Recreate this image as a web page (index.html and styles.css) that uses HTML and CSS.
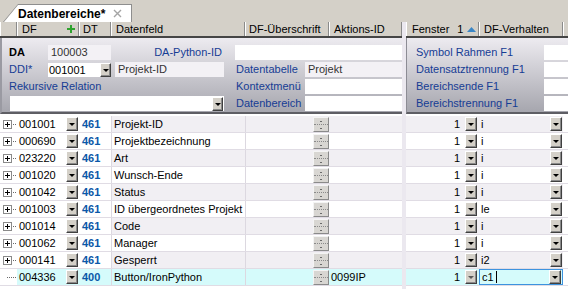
FILE: index.html
```html
<!DOCTYPE html>
<html lang="de">
<head>
  <meta charset="UTF-8"/>
  <title>Datenbereiche</title>
  <link rel="stylesheet" href="styles.css">
</head>
<body>

  <!-- TAB STRIP -->
  <div class="tabs">
    <div class="tab">
      <div class="tab-in">
        <span class="tab-title">Datenbereiche*</span>
        <svg class="tab-x" width="9" height="9" viewBox="0 0 9 9"><path d="M1 1L8 8M8 1L1 8" stroke="#a4a4a4" stroke-width="1.4"/></svg>
      </div>
    </div>
  </div>

  <div class="grid">

    <!-- LEFT PANE -->
    <div class="pane pane-left">
      <div class="head">
        <div class="hc c-tree"></div>
        <div class="hc c-df">DF
          <svg class="plus" width="8" height="8" viewBox="0 0 8 8"><path d="M3 0h2v3h3v2H5v3H3V5H0V3h3z" fill="#2fa32f"/></svg>
        </div>
        <div class="hc c-dt">DT</div>
        <div class="hc c-feld">Datenfeld</div>
        <div class="hc c-ueb">DF-Überschrift</div>
        <div class="hc c-akt">Aktions-ID</div>
      </div>

      <div class="form form-left">
        <div class="lbl bold">DA</div>
        <div class="fld ro">100003</div>
        <div class="lbl python">DA-Python-ID</div>
        <div class="fld wide"></div>

        <div class="lbl">DDI*</div>
        <div class="combo"><span class="fld">001001</span><span class="dd"></span></div>
        <div class="fld ro c4">Projekt-ID</div>
        <div class="lbl c6">Datentabelle</div>
        <div class="fld ro c7">Projekt</div>

        <div class="lbl span4">Rekursive Relation</div>
        <div class="lbl c6">Kontextmenü</div>
        <div class="fld c7"></div>

        <div class="fld select span4"><span class="dd"></span></div>
        <div class="lbl c6">Datenbereich</div>
        <div class="fld c7"></div>
      </div>

      <div class="rows">
        <div class="row alt">
          <div class="c-tree"><span class="box"></span><span class="dots"></span></div>
          <div class="c-df">001001<span class="dd"></span></div>
          <div class="c-dt">461</div>
          <div class="c-feld">Projekt-ID</div>
          <div class="c-ueb"><span class="ell"><i></i><i></i></span></div>
          <div class="c-akt"></div>
        </div>
        <div class="row">
          <div class="c-tree"><span class="box"></span><span class="dots"></span></div>
          <div class="c-df">000690<span class="dd"></span></div>
          <div class="c-dt">461</div>
          <div class="c-feld">Projektbezeichnung</div>
          <div class="c-ueb"><span class="ell"><i></i><i></i></span></div>
          <div class="c-akt"></div>
        </div>
        <div class="row alt">
          <div class="c-tree"><span class="box"></span><span class="dots"></span></div>
          <div class="c-df">023220<span class="dd"></span></div>
          <div class="c-dt">461</div>
          <div class="c-feld">Art</div>
          <div class="c-ueb"><span class="ell"><i></i><i></i></span></div>
          <div class="c-akt"></div>
        </div>
        <div class="row">
          <div class="c-tree"><span class="box"></span><span class="dots"></span></div>
          <div class="c-df">001020<span class="dd"></span></div>
          <div class="c-dt">461</div>
          <div class="c-feld">Wunsch-Ende</div>
          <div class="c-ueb"><span class="ell"><i></i><i></i></span></div>
          <div class="c-akt"></div>
        </div>
        <div class="row alt">
          <div class="c-tree"><span class="box"></span><span class="dots"></span></div>
          <div class="c-df">001042<span class="dd"></span></div>
          <div class="c-dt">461</div>
          <div class="c-feld">Status</div>
          <div class="c-ueb"><span class="ell"><i></i><i></i></span></div>
          <div class="c-akt"></div>
        </div>
        <div class="row">
          <div class="c-tree"><span class="box"></span><span class="dots"></span></div>
          <div class="c-df">001003<span class="dd"></span></div>
          <div class="c-dt">461</div>
          <div class="c-feld">ID übergeordnetes Projekt</div>
          <div class="c-ueb"><span class="ell"><i></i><i></i></span></div>
          <div class="c-akt"></div>
        </div>
        <div class="row alt">
          <div class="c-tree"><span class="box"></span><span class="dots"></span></div>
          <div class="c-df">001014<span class="dd"></span></div>
          <div class="c-dt">461</div>
          <div class="c-feld">Code</div>
          <div class="c-ueb"><span class="ell"><i></i><i></i></span></div>
          <div class="c-akt"></div>
        </div>
        <div class="row">
          <div class="c-tree"><span class="box"></span><span class="dots"></span></div>
          <div class="c-df">001062<span class="dd"></span></div>
          <div class="c-dt">461</div>
          <div class="c-feld">Manager</div>
          <div class="c-ueb"><span class="ell"><i></i><i></i></span></div>
          <div class="c-akt"></div>
        </div>
        <div class="row alt">
          <div class="c-tree"><span class="box"></span><span class="dots"></span></div>
          <div class="c-df">000141<span class="dd"></span></div>
          <div class="c-dt">461</div>
          <div class="c-feld">Gesperrt</div>
          <div class="c-ueb"><span class="ell"><i></i><i></i></span></div>
          <div class="c-akt"></div>
        </div>
        <div class="row sel">
          <div class="c-tree leaf"><span class="dots"></span></div>
          <div class="c-df">004336<span class="dd"></span></div>
          <div class="c-dt">400</div>
          <div class="c-feld">Button/IronPython</div>
          <div class="c-ueb"><span class="ell"><i></i><i></i></span></div>
          <div class="c-akt">0099IP</div>
        </div>
      </div>
    </div>

    <div class="split"></div>

    <!-- RIGHT PANE -->
    <div class="pane pane-right">
      <div class="head">
        <div class="hc c-fen">Fenster<span class="sort">1<svg width="9" height="5" viewBox="0 0 9 5"><path d="M0 5L4.5 0 9 5z" fill="#3a86c6"/></svg></span></div>
        <div class="hc c-verh">DF-Verhalten</div>
        <div class="hc c-rest"></div>
      </div>

      <div class="form form-right">
        <div class="lbl">Symbol Rahmen F1</div>
        <div class="fld"></div>
        <div class="lbl">Datensatztrennung F1</div>
        <div class="fld"></div>
        <div class="lbl">Bereichsende F1</div>
        <div class="fld"></div>
        <div class="lbl">Bereichstrennung F1</div>
        <div class="fld"></div>
      </div>

      <div class="rows">
        <div class="row alt"><div class="c-fen">1<span class="dd"></span></div><div class="c-verh">i<span class="dd"></span></div></div>
        <div class="row"><div class="c-fen">1<span class="dd"></span></div><div class="c-verh">i<span class="dd"></span></div></div>
        <div class="row alt"><div class="c-fen">1<span class="dd"></span></div><div class="c-verh">i<span class="dd"></span></div></div>
        <div class="row"><div class="c-fen">1<span class="dd"></span></div><div class="c-verh">i<span class="dd"></span></div></div>
        <div class="row alt"><div class="c-fen">1<span class="dd"></span></div><div class="c-verh">i<span class="dd"></span></div></div>
        <div class="row"><div class="c-fen">1<span class="dd"></span></div><div class="c-verh">le<span class="dd"></span></div></div>
        <div class="row alt"><div class="c-fen">1<span class="dd"></span></div><div class="c-verh">i<span class="dd"></span></div></div>
        <div class="row"><div class="c-fen">1<span class="dd"></span></div><div class="c-verh">i<span class="dd"></span></div></div>
        <div class="row alt"><div class="c-fen">1<span class="dd"></span></div><div class="c-verh">i2<span class="dd"></span></div></div>
        <div class="row sel"><div class="c-fen">1<span class="dd off"></span></div><div class="c-verh editing">c1<span class="caret"></span><span class="dd"></span></div></div>
      </div>
    </div>

  </div>
</body>
</html>
```

FILE: styles.css
```css
* { box-sizing: border-box; }
body {
  margin: 0;
  width: 568px;
  height: 289px;
  overflow: hidden;
  background: #fff;
  font-family: 'Liberation Sans', Arial, sans-serif;
  font-size: 11px;
  color: #000;
}

/* tab strip */
.tabs {
  height: 22px;
  background: #d4d0c8;
  padding: 4px 0 0 3px;
  display: flex;
}
.tab {
  width: 129px;
  height: 18px;
  padding: 1px 1px 0 1px;
  background: #8e8e8e;
  clip-path: polygon(0 100%, 15px 0, 100% 0, 100% 100%);
}
.tab-in {
  height: 100%;
  display: flex;
  align-items: center;
  padding-left: 14px;
  background: #fff;
  clip-path: polygon(0 100%, 14px 0, 100% 0, 100% 100%);
}
.tab-title {
  font-size: 12px;
  font-weight: bold;
}
.tab-x { margin-left: 8px; }

/* panes */
.grid {
  display: flex;
  height: 267px;
}
.pane-left { width: 402px; }
.pane-right { flex: 1; }
.split {
  width: 5px;
  background: #ebe8ef;
}

/* header */
.head {
  display: flex;
  height: 16px;
  background: #d4d0c8;
  border-bottom: 2px solid #454545;
}
.hc {
  height: 14px;
  line-height: 14px;
  padding-left: 5px;
  border-right: 1px solid #8a8a8a;
  box-shadow: inset 1px 0 #fff;
  white-space: nowrap;
}
.head .c-df {
  display: flex;
  align-items: center;
  justify-content: space-between;
  padding-right: 3px;
}
.head .c-dt { padding-left: 4px; }
.head .c-ueb { padding-left: 4px; }
.head .c-fen { padding-left: 6px; }
.sort { margin-left: 8px; }
.sort svg { margin-left: 4px; vertical-align: 1px; }

/* column widths */
.c-tree { width: 17px; }
.c-df   { width: 62px; }
.c-dt   { width: 32px; }
.c-feld { width: 134px; }
.c-ueb  { width: 84px; }
.c-akt  { width: 73px; }
.c-fen  { width: 73px; }
.c-verh { width: 84px; }
.c-rest { flex: 1; border-right: none; }

/* form panels */
.form {
  height: 76px;
  padding-top: 7px;
  background: linear-gradient(#edebf0, #a6a6ae);
  border-bottom: 2px solid #5e5e64;
  display: grid;
  grid-template-rows: repeat(4, 15px);
  row-gap: 2px;
  align-items: stretch;
}
.form-left {
  padding-left: 7px;
  border-left: 2px solid #9a9aa2;
  grid-template-columns: 39px 63px 4px 109px 11px 70px 97px;
}
.form-right {
  padding-left: 9px;
  border-left: 1px solid #8c8c94;
  grid-template-columns: 1fr 24px;
}
.lbl {
  color: #163c94;
  line-height: 15px;
  white-space: nowrap;
}
.lbl.bold {
  color: #000;
  font-weight: bold;
}
.fld {
  background: #fff;
  line-height: 15px;
  padding-left: 3px;
  white-space: nowrap;
}
.fld.ro {
  background: #f3f1f5;
  color: #333;
}
.python {
  grid-column: 3 / 5;
  text-align: right;
  padding-right: 2px;
}
.wide { grid-column: 6 / 8; }
.c4 { grid-column: 4; }
.c6 { grid-column: 6; padding-left: 1px; }
.c7 { grid-column: 7; }
.span4 { grid-column: 1 / 5; }
.combo {
  display: flex;
  align-items: center;
}
.combo .fld {
  flex: 1;
  height: 14px;
  line-height: 14px;
  padding-left: 1px;
}
.select {
  margin-left: 1px;
  display: flex;
  align-items: center;
  justify-content: flex-end;
  padding-right: 1px;
}

/* dropdown button */
.dd {
  display: inline-block;
  position: relative;
  width: 12px;
  height: 14px;
  flex-shrink: 0;
  background: #d4d0c8;
  border: 1px solid;
  border-color: #fff #404040 #404040 #fff;
  box-shadow: inset -1px -1px #8a8a8a;
}
.dd::after {
  content: '';
  position: absolute;
  left: 2px;
  top: 5px;
  border: 3px solid transparent;
  border-top: 3px solid #000;
  border-bottom: none;
}
.combo .dd, .select .dd { width: 11px; }
.dd.off::after { border-top-color: #5a5a5a; }

/* rows */
.rows { margin-top: 2px; }
.row {
  display: flex;
  height: 17px;
  border-bottom: 1px solid #e0dce4;
}
.row > div {
  display: flex;
  align-items: center;
  white-space: nowrap;
  overflow: hidden;
}
.row.alt .c-feld,
.row.alt .c-ueb,
.row.alt .c-akt,
.row.alt .c-fen,
.row.alt .c-verh { background: #f1eff3; }
.row.sel > div:not(.c-tree) { background: #d5fbfb; }

.row .c-tree { padding-left: 3px; }
.box {
  position: relative;
  width: 9px;
  height: 9px;
  border: 1px solid #8a8a8a;
  background: #fff;
}
.box::before, .box::after {
  content: '';
  position: absolute;
  background: #000;
}
.box::before { left: 1px; top: 3px; width: 5px; height: 1px; }
.box::after { left: 3px; top: 1px; width: 1px; height: 5px; }
.dots {
  flex: 1;
  height: 1px;
  margin-left: 1px;
  background: repeating-linear-gradient(90deg, #6a6a6a 0 1px, transparent 1px 2px);
}
.row .c-tree.leaf { padding-left: 6px; }

.row .c-df { padding: 0 1px 0 2px; justify-content: space-between; }
.row .c-dt {
  padding-left: 3px;
  font-weight: bold;
  color: #0a58a8;
}
.row .c-feld {
  padding-left: 2px;
  border-left: 1px solid #dcd8e0;
}
.row .c-ueb {
  justify-content: flex-end;
  border-left: 1px solid #dcd8e0;
}
.row .c-akt { padding-left: 2px; }

.ell {
  width: 16px;
  height: 15px;
  display: flex;
  flex-direction: column;
  background: #d8d6d2;
  border: 1px solid;
  border-color: #f4f4f4 #8a8a8a #8a8a8a #f4f4f4;
}
.ell i {
  flex: 1;
  position: relative;
}
.ell i:first-child {
  border-bottom: 1px dotted #8a8a8a;
}
.ell i::after {
  content: '';
  position: absolute;
  left: 6px;
  top: 3px;
  width: 2px;
  height: 1px;
  background: #6a6a6a;
}

.row .c-fen { justify-content: flex-end; padding-right: 2px; }
.row .c-fen .dd { margin-left: 5px; }
.row .c-verh {
  padding: 0 1px 0 2px;
  justify-content: space-between;
}
.row .c-verh.editing {
  background: #cfe3f8;
  border: 1px solid #3d93df;
  justify-content: flex-start;
  padding-left: 2px;
}
.caret {
  width: 1px;
  height: 12px;
  margin-left: 2px;
  background: #000;
}
.editing .dd { margin-left: auto; }
```
